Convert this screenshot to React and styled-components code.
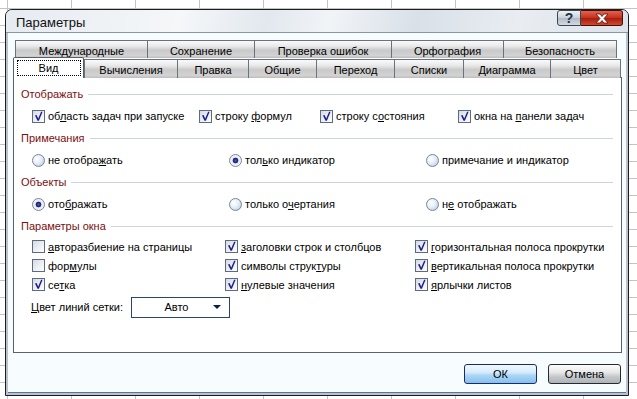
import React from 'react'
import styled, { createGlobalStyle } from 'styled-components'

const GlobalStyle = createGlobalStyle`
  html, body {
    margin: 0;
    padding: 0;
  }
  body {
    width: 637px;
    height: 399px;
    overflow: hidden;
    background-color: #fff;
    background-image:
      linear-gradient(to right, #c4c4c4 1px, transparent 1px),
      linear-gradient(to bottom, #c4c4c4 1px, transparent 1px);
    background-size: 64px 17px;
    background-position: 7px 8px;
    font-family: "Liberation Sans", Arial, sans-serif;
    font-size: 11px;
    color: #000;
  }
`

const backTabs = [
  { label: 'Международные', width: 132 },
  { label: 'Сохранение', width: 107 },
  { label: 'Проверка ошибок', width: 137 },
  { label: 'Орфография', width: 112 },
  { label: 'Безопасность', width: 114 },
]

const frontTabs = [
  { label: 'Вид', width: 71, active: true },
  { label: 'Вычисления', width: 93 },
  { label: 'Правка', width: 71 },
  { label: 'Общие', width: 68 },
  { label: 'Переход', width: 78 },
  { label: 'Списки', width: 69 },
  { label: 'Диаграмма', width: 87 },
  { label: 'Цвет', width: 71 },
]

function Check() {
  return (
    <svg width="11" height="11" viewBox="0 0 11 11">
      <path d="M2 4.4 L4.5 9.8 L5.9 9.8 L9.6 0.8 L8.1 0.8 L5.2 7.6 L3.6 4 Z" fill="#1f1f92" />
    </svg>
  )
}

function CheckBox({ checked, children }) {
  return (
    <Item>
      <Box>{checked && <Check />}</Box>
      <span>{children}</span>
    </Item>
  )
}

function Radio({ checked, children }) {
  return (
    <Item>
      <Circle $checked={checked} />
      <span>{children}</span>
    </Item>
  )
}

function Section({ title }) {
  return (
    <Header>
      <span>{title}</span>
      <Rule />
    </Header>
  )
}

export default function App() {
  return (
    <>
      <GlobalStyle />
      <Window>
        <TitleBar>
          <Title>Параметры</Title>
          <Controls>
            <HelpButton>?</HelpButton>
            <CloseButton>
              <svg width="16" height="11" viewBox="0 0 16 11">
                <path d="M2 1 L6 1 L8 3.5 L10 1 L14 1 L10 5.5 L14 10 L10 10 L8 7.5 L6 10 L2 10 L6 5.5 Z"
                  fill="#fff" stroke="#5a1008" strokeWidth="0.8" />
              </svg>
            </CloseButton>
          </Controls>
        </TitleBar>
        <Client>
          <BackRow>
            {backTabs.map(t => (
              <BackTab key={t.label} $w={t.width}>{t.label}</BackTab>
            ))}
          </BackRow>
          <FrontRow>
            {frontTabs.map(t => (
              <FrontTab key={t.label} $w={t.width} $active={t.active}>
                {t.active ? <Focus>{t.label}</Focus> : t.label}
              </FrontTab>
            ))}
          </FrontRow>
          <Panel>
            <Section title="Отображать" />
            <Row $cols="167px 121px 138px 1fr">
              <CheckBox checked>об<u>л</u>асть задач при запуске</CheckBox>
              <CheckBox checked>строку <u>ф</u>ормул</CheckBox>
              <CheckBox checked>строку с<u>о</u>стояния</CheckBox>
              <CheckBox checked>окна на <u>п</u>анели задач</CheckBox>
            </Row>
            <Section title="Примечания" />
            <Row $cols="197px 197px 1fr">
              <Radio>не отобра<u>ж</u>ать</Radio>
              <Radio checked>тол<u>ь</u>ко индикатор</Radio>
              <Radio>примечание и ин<u>д</u>икатор</Radio>
            </Row>
            <Section title="Объекты" />
            <Row $cols="197px 197px 1fr">
              <Radio checked>ото<u>б</u>ражать</Radio>
              <Radio>только о<u>ч</u>ертания</Radio>
              <Radio>н<u>е</u> отображать</Radio>
            </Row>
            <Section title="Параметры окна" />
            <Row $cols="193px 190px 1fr" $h={19}>
              <CheckBox><u>а</u>вторазбиение на страницы</CheckBox>
              <CheckBox checked><u>з</u>аголовки строк и столбцов</CheckBox>
              <CheckBox checked><u>г</u>оризонтальная полоса прокрутки</CheckBox>
              <CheckBox>фор<u>м</u>улы</CheckBox>
              <CheckBox checked>символы струк<u>т</u>уры</CheckBox>
              <CheckBox checked><u>в</u>ертикальная полоса прокрутки</CheckBox>
              <CheckBox checked>се<u>т</u>ка</CheckBox>
              <CheckBox checked><u>н</u>улевые значения</CheckBox>
              <CheckBox checked><u>я</u>рлычки листов</CheckBox>
            </Row>
            <ColorRow>
              <span><u>Ц</u>вет линий сетки:</span>
              <Select>
                <span>Авто</span>
                <Arrow />
              </Select>
            </ColorRow>
          </Panel>
          <Footer>
            <Button $primary>ОК</Button>
            <Button>Отмена</Button>
          </Footer>
        </Client>
      </Window>
    </>
  )
}

const Window = styled.div`
  margin: 9px 0 0 5px;
  width: 622px;
  height: 385px;
  border: 1px solid #1e1e1e;
  border-radius: 7px 7px 0 0;
  background: #b9c2cd;
  display: flex;
  flex-direction: column;
  overflow: hidden;
`

const TitleBar = styled.div`
  height: 22px;
  display: flex;
  align-items: center;
  justify-content: space-between;
  padding: 0 5px 0 10px;
  border-bottom: 1px solid #8b96a4;
  background: linear-gradient(100deg, #e6ebf0 0%, #f5f7f9 28%, #e2e8ee 42%, #f1f4f7 52%, #d9e0e8 66%, #e9edf2 82%, #dce2e9 100%);
`

const Title = styled.div`
  font-size: 13px;
  color: #111;
  padding-top: 2px;
`

const Controls = styled.div`
  display: flex;
  align-self: flex-start;
`

const HelpButton = styled.div`
  width: 24px;
  height: 16px;
  box-sizing: border-box;
  border: 1px solid #3c4650;
  border-radius: 3px 0 0 3px;
  background: linear-gradient(#eef2f6, #c7d0da 50%, #aeb9c6 51%, #d2dae3);
  color: #243040;
  font-size: 14px;
  font-weight: bold;
  line-height: 14px;
  text-align: center;
`

const CloseButton = styled.div`
  width: 42px;
  height: 16px;
  box-sizing: border-box;
  border: 1px solid #4a0c06;
  border-left: none;
  border-radius: 0 3px 3px 0;
  background: linear-gradient(#e2634e, #c2301c 50%, #a51c0c 51%, #cf4a30);
  display: flex;
  align-items: center;
  justify-content: center;
`

const Client = styled.div`
  flex: 1;
  margin: 0 2px 2px 2px;
  background: #f7fcff;
  border-bottom: 1px solid #5a73a0;
  display: flex;
  flex-direction: column;
  padding: 7px 4px 0 5px;
`

const BackRow = styled.div`
  display: flex;
  height: 18px;
  padding-left: 2px;
`

const tabFace = `
  box-sizing: border-box;
  border: 1px solid #6a727c;
  border-bottom: none;
  border-right: none;
  background: linear-gradient(#fafafa 0%, #e9e9e9 30%, #c9c9c9 55%, #d3d3d3 85%, #bdbdbd 100%);
  display: flex;
  align-items: center;
  justify-content: center;
  &:last-child { border-right: 1px solid #6a727c; }
`

const BackTab = styled.div`
  ${tabFace}
  width: ${p => p.$w}px;
  padding-top: 2px;
`

const FrontRow = styled.div`
  display: flex;
  height: 20px;
  align-items: flex-end;
  position: relative;
  z-index: 1;
  margin-bottom: -1px;
`

const FrontTab = styled.div`
  ${tabFace}
  width: ${p => p.$w}px;
  height: ${p => (p.$active ? 21 : 19)}px;
  padding-top: 1px;
  ${p => p.$active && `
    background: #fff;
    border: 1px solid #565e68;
    border-bottom: none;
    border-radius: 2px 2px 0 0;
  `}
`

const Focus = styled.span`
  width: 64px;
  height: 16px;
  box-sizing: border-box;
  border: 1px dotted #000;
  display: flex;
  align-items: center;
  justify-content: center;
  margin-top: -1px;
`

const Panel = styled.div`
  height: 276px;
  border: 1px solid #5a6270;
  background: #fff;
  padding: 5px 8px 0 7px;
  box-sizing: border-box;
`

const Header = styled.div`
  height: 22px;
  display: flex;
  align-items: center;
  gap: 5px;
  color: #7b0f0f;
`

const Rule = styled.div`
  flex: 1;
  height: 1px;
  background: #cdd4dc;
`

const Row = styled.div`
  display: grid;
  grid-template-columns: ${p => p.$cols};
  grid-auto-rows: ${p => p.$h || 22}px;
  padding-left: 11px;
  align-items: center;
`

const Item = styled.div`
  display: flex;
  align-items: center;
  gap: 3px;
  white-space: nowrap;
  u { text-underline-offset: 1px; }
`

const Box = styled.div`
  width: 13px;
  height: 13px;
  box-sizing: border-box;
  border: 1px solid #5b6b82;
  background: linear-gradient(135deg, #d5d9df 0%, #eceef1 50%, #fdfdfd 100%);
  display: flex;
  align-items: center;
  justify-content: center;
`

const Circle = styled.div`
  width: 13px;
  height: 13px;
  box-sizing: border-box;
  border-radius: 50%;
  border: 1px solid #7a8595;
  background: ${p => p.$checked
    ? 'radial-gradient(circle at 50% 50%, #4a57c0 0, #1b1f6a 2.5px, #e4ebf3 3.2px, #ffffff 100%)'
    : 'radial-gradient(circle at 35% 35%, #ffffff 0, #e6eef8 45%, #a9c1dd 100%)'};
`

const ColorRow = styled.div`
  display: flex;
  align-items: center;
  gap: 8px;
  margin-top: 2px;
  padding-left: 10px;
  height: 22px;
`

const Select = styled.div`
  width: 99px;
  height: 21px;
  box-sizing: border-box;
  border: 1px solid #2a4470;
  background: #fff;
  display: flex;
  align-items: center;
  padding: 0 8px 0 0;
  span { flex: 1; text-align: center; padding-left: 8px; }
`

const Arrow = styled.div`
  width: 0;
  height: 0;
  border-left: 4px solid transparent;
  border-right: 4px solid transparent;
  border-top: 4px solid #0c1e50;
`

const Footer = styled.div`
  display: flex;
  justify-content: flex-end;
  gap: 11px;
  padding: 11px 1px 0 0;
`

const Button = styled.div`
  width: 73px;
  height: 20px;
  box-sizing: border-box;
  border: 1px solid ${p => (p.$primary ? '#1b2a6e' : '#2a2a2a')};
  border-radius: 3px;
  display: flex;
  align-items: center;
  justify-content: center;
  background: ${p => p.$primary
    ? 'linear-gradient(#f2f9ff 0%, #d7ecfb 40%, #a8d4f4 60%, #86c1ec 100%)'
    : 'linear-gradient(#fdfdfd 0%, #e8e8e8 40%, #c4c8cc 65%, #aeb3b8 100%)'};
`
